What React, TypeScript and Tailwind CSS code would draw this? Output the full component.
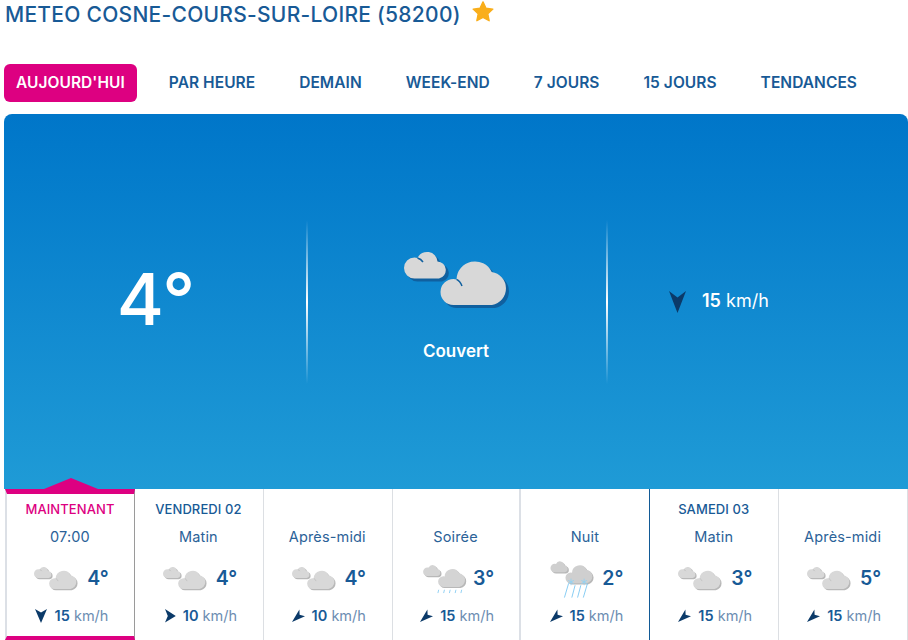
type Sky = "cloud" | "rain" | "snow";
type Arrow = "down" | "right" | "downleft";

type Slot = {
  day?: string;
  label: string;
  sky: Sky;
  temp: string;
  arrow: Arrow;
  speed: string;
  selected?: boolean;
  dayBreak?: boolean;
};

const slots: Slot[] = [
  { day: "MAINTENANT", label: "07:00", sky: "cloud", temp: "4°", arrow: "down", speed: "15", selected: true },
  { day: "VENDREDI 02", label: "Matin", sky: "cloud", temp: "4°", arrow: "right", speed: "10" },
  { label: "Après-midi", sky: "cloud", temp: "4°", arrow: "downleft", speed: "10" },
  { label: "Soirée", sky: "rain", temp: "3°", arrow: "downleft", speed: "15" },
  { label: "Nuit", sky: "snow", temp: "2°", arrow: "downleft", speed: "15", dayBreak: true },
  { day: "SAMEDI 03", label: "Matin", sky: "cloud", temp: "3°", arrow: "downleft", speed: "15" },
  { label: "Après-midi", sky: "cloud", temp: "5°", arrow: "downleft", speed: "15" },
];

const tabs = ["PAR HEURE", "DEMAIN", "WEEK-END", "7 JOURS", "15 JOURS", "TENDANCES"];

const arrowPaths: Record<Arrow, string> = {
  down: "M0 0L6 3.500L12 0L6 14Z",
  right: "M2 0L4.800 7L2 13.500L12.800 7Z",
  downleft: "M0 13L13 7.200L7.600 5.800L7.400 0.400Z",
};

const CloudShapes = ({ fill }: { fill: string }) => (
  <g fill={fill}>
    <path d="M10.500 26.500A10.500 10.500 0 0 1 10.500 5.500Q12 5.500 13.500 6A10.500 10.500 0 0 1 33.500 9.500A8.600 8.600 0 0 1 35 26.500Z" />
    <path d="M49.500 53A13 13 0 0 1 49.500 27Q51 27 52.500 27.400A18.500 18.500 0 0 1 87.700 20A16.700 16.700 0 0 1 88 53Z" />
  </g>
);

const Clouds = ({ width, shade }: { width: number; shade: string }) => (
  <svg
    width={width}
    height={(width * 56) / 106}
    viewBox="0 0 106 56"
    className="shrink-0 overflow-visible"
  >
    <g transform="translate(3 3)">
      <CloudShapes fill={shade} />
    </g>
    <CloudShapes fill="#d8d8d8" />
    <path d="M52.500 27.400Q56 29 58 34M13.500 6Q17 7 19 10" fill="none" stroke={shade} strokeWidth="1.500" />
  </svg>
);

const RainIcon = () => (
  <svg width="44" height="23" viewBox="0 0 106 56" className="shrink-0 overflow-visible">
    <g transform="translate(7 -7)">
      <g transform="translate(3 3)">
        <CloudShapes fill="#b8b8b8" />
      </g>
      <CloudShapes fill="#d4d4d4" />
      <path
        d="M38 60l-2 8M52 60l-2 8M66 60l-2 8M80 60l-2 8M94 60l-2 8"
        stroke="#7cc8f2"
        strokeWidth="2"
        fill="none"
      />
    </g>
  </svg>
);

const SnowIcon = () => (
  <svg width="44" height="23" viewBox="0 0 106 56" className="shrink-0 overflow-visible">
    <g transform="translate(3 -16)">
      <g transform="translate(3 3)">
        <CloudShapes fill="#b8b8b8" />
      </g>
      <CloudShapes fill="#cfcfcf" />
      <path
        d="M44 54l-10 34M60 58l-8 30M74 58l-8 30M90 54l-10 34"
        stroke="#7cc8f2"
        strokeWidth="2.200"
        fill="none"
      />
      <path
        d="M50 42v16M43 46l14 8M57 46l-14 8M82 42v16M75 46l14 8M89 46l-14 8"
        stroke="#8fd2f5"
        strokeWidth="2"
        fill="none"
      />
    </g>
  </svg>
);

const WindArrow = ({ arrow }: { arrow: Arrow }) => (
  <svg width="13" height="14" viewBox="0 0 13 14" className="shrink-0">
    <path d={arrowPaths[arrow]} fill="#0b3a69" />
  </svg>
);

const SlotCell = ({ slot }: { slot: Slot }) => (
  <div
    className={
      "relative flex h-[151px] flex-col items-center bg-white " +
      (slot.selected
        ? "border-t-[5px] border-r border-b-4 border-l-2 border-t-[#dd0081] border-r-[#9a9a9a] border-b-[#dd0081] border-l-[#dce0e6] pt-[5px]"
        : slot.dayBreak
          ? "border-r border-r-[#125a96] pt-[10px]"
          : slot.label === "Soirée"
            ? "border-r-2 border-r-[#dce0e6] pt-[10px]"
            : "border-r border-r-[#dcdfe3] pt-[10px]")
    }
  >
    {slot.selected && (
      <span className="absolute -top-[16px] left-[37px] h-[11px] w-[54px] bg-[#dd0081] [clip-path:polygon(50%_0,100%_100%,0_100%)]" />
    )}
    <div
      className={
        "h-5 pr-[1px] text-[13px] leading-5 font-medium tracking-[0.1px] " +
        (slot.selected ? "text-[#dd0081]" : "text-[#185a96]")
      }
    >
      {slot.day}
    </div>
    <div className="mt-2 h-5 pr-[1px] text-[14.500px] leading-5 tracking-[0.15px] text-[#2b6298]">{slot.label}</div>
    <div className="mt-3 flex h-10 items-center gap-[9px] pl-[2px]">
      {slot.sky === "cloud" && <Clouds width={44} shade="#b8b8b8" />}
      {slot.sky === "rain" && <RainIcon />}
      {slot.sky === "snow" && <SnowIcon />}
      <span className="text-[19.500px] font-semibold text-[#185a96]">{slot.temp}</span>
    </div>
    <div className="mt-[7px] flex h-5 items-center gap-[7px] pl-[2px] text-[14.500px]">
      <WindArrow arrow={slot.arrow} />
      <span className="text-[#6c8db2]">
        <b className="font-semibold text-[#185a96]">{slot.speed}</b> km/h
      </span>
    </div>
  </div>
);

export default function App() {
  return (
    <div className="h-[640px] w-[908px] overflow-hidden bg-white font-['Inter',sans-serif]">
      <div className="flex h-[28px] items-start pl-[5px]">
        <h1 className="mt-[1px] text-[21px] leading-[28px] font-medium tracking-[0.27px] text-[#185a96]">
          METEO COSNE-COURS-SUR-LOIRE (58200)
        </h1>
        <svg width="22" height="21" viewBox="0 0 24 23" className="mt-[1px] ml-[11px]">
          <path
            d="M12 1l3.300 6.900 7.500 1-5.500 5.200 1.400 7.500L12 18l-6.700 3.600 1.400-7.500L1.200 8.900l7.500-1z"
            fill="#f9ae1b"
            stroke="#f9ae1b"
            strokeWidth="1.500"
            strokeLinejoin="round"
          />
        </svg>
      </div>

      <nav className="mt-9 ml-1 flex h-[38px] items-center gap-5 text-[15.500px] font-semibold tracking-[0.05px] text-[#185a96]">
        <a className="flex h-[38px] items-center rounded-md bg-[#dd0081] px-3 text-white">AUJOURD'HUI</a>
        {tabs.map((tab) => (
          <a key={tab} className="px-3">
            {tab}
          </a>
        ))}
      </nav>

      <div className="mt-3 ml-1 flex h-[375px] items-center rounded-t-lg bg-gradient-to-b from-[#0076c9] to-[#1f9bd6] text-white">
        <div className="mb-[6px] flex w-[302px] justify-center pl-[2px] text-[72px] leading-none font-medium">4°</div>
        <div className="h-[164px] w-[2px] bg-gradient-to-b from-transparent via-white to-transparent" />
        <div className="flex w-[298px] flex-col items-center pt-[14px]">
          <Clouds width={106} shade="#10609f" />
          <div className="mt-[31px] pr-[2px] text-[17px] font-semibold">Couvert</div>
        </div>
        <div className="h-[164px] w-[2px] bg-gradient-to-b from-transparent via-white to-transparent" />
        <div className="flex flex-1 items-center gap-4 pl-[61px] text-[18px]">
          <svg width="17" height="22" viewBox="0 0 17 22" className="shrink-0">
            <path d="M0 0L8.500 6.500L17 0L8.500 22Z" fill="#0b3a69" />
          </svg>
          <span className="mb-[2px]">
            <b className="font-semibold">15</b> km/h
          </span>
        </div>
      </div>

      <div className="ml-[5px] grid w-[903px] grid-cols-[130px_repeat(6,1fr)]">
        {slots.map((slot, i) => (
          <SlotCell key={i} slot={slot} />
        ))}
      </div>
    </div>
  );
}
